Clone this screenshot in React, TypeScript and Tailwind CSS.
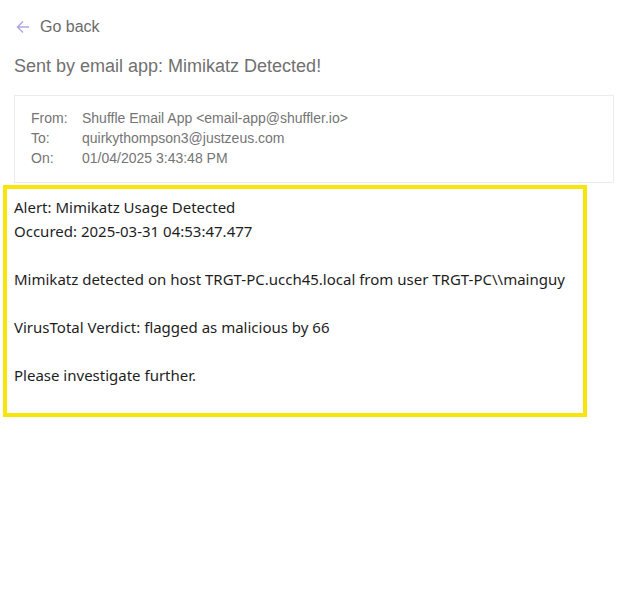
import React from 'react';

const headerFont = { fontFamily: '"Liberation Sans", Arial, sans-serif' };

export default function App() {
  return (
    <div className="min-h-screen w-[628px] bg-white">
      <div className="px-[14px] pt-[15px]" style={headerFont}>
        <button className="flex items-center gap-[10px] pl-[2px] text-[16px] text-[#6b6b6b]">
          <svg width="14" height="14" viewBox="0 0 14 14" fill="none" stroke="#b3a6e6" strokeWidth="1.5">
            <path d="M13 7H1.5M7 1.5L1.5 7L7 12.5" />
          </svg>
          <span>Go back</span>
        </button>
        <h1 className="mt-[16px] text-[18px] leading-[22px] text-[#707070]">
          Sent by email app: Mimikatz Detected!
        </h1>
        <div className="mt-[18px] w-[600px] border border-[#ececec] px-[16px] pt-[12px] pb-[14px] text-[14px] leading-[20px] text-[#757575]">
          <div className="grid grid-cols-[51px_1fr]">
            <span>From:</span>
            <span>Shuffle Email App &lt;email-app@shuffler.io&gt;</span>
            <span>To:</span>
            <span>quirkythompson3@justzeus.com</span>
            <span>On:</span>
            <span>01/04/2025 3:43:48 PM</span>
          </div>
        </div>
      </div>
      <div
        className="ml-[3px] mt-[2px] w-[584px] border-[4px] border-[#f7e50c] px-[7px] pt-[6px] pb-[26px] text-[15px] leading-[24px] text-[#1e1e1e]"
        style={{ fontFamily: '"Noto Sans", "Open Sans", sans-serif' }}
      >
        <div>Alert: Mimikatz Usage Detected</div>
        <div>Occured: 2025-03-31 04:53:47.477</div>
        <div className="h-[24px]" />
        <div>Mimikatz detected on host TRGT-PC.ucch45.local from user TRGT-PC\\mainguy</div>
        <div className="h-[24px]" />
        <div>VirusTotal Verdict: flagged as malicious by 66</div>
        <div className="h-[24px]" />
        <div>Please investigate further.</div>
      </div>
    </div>
  );
}
